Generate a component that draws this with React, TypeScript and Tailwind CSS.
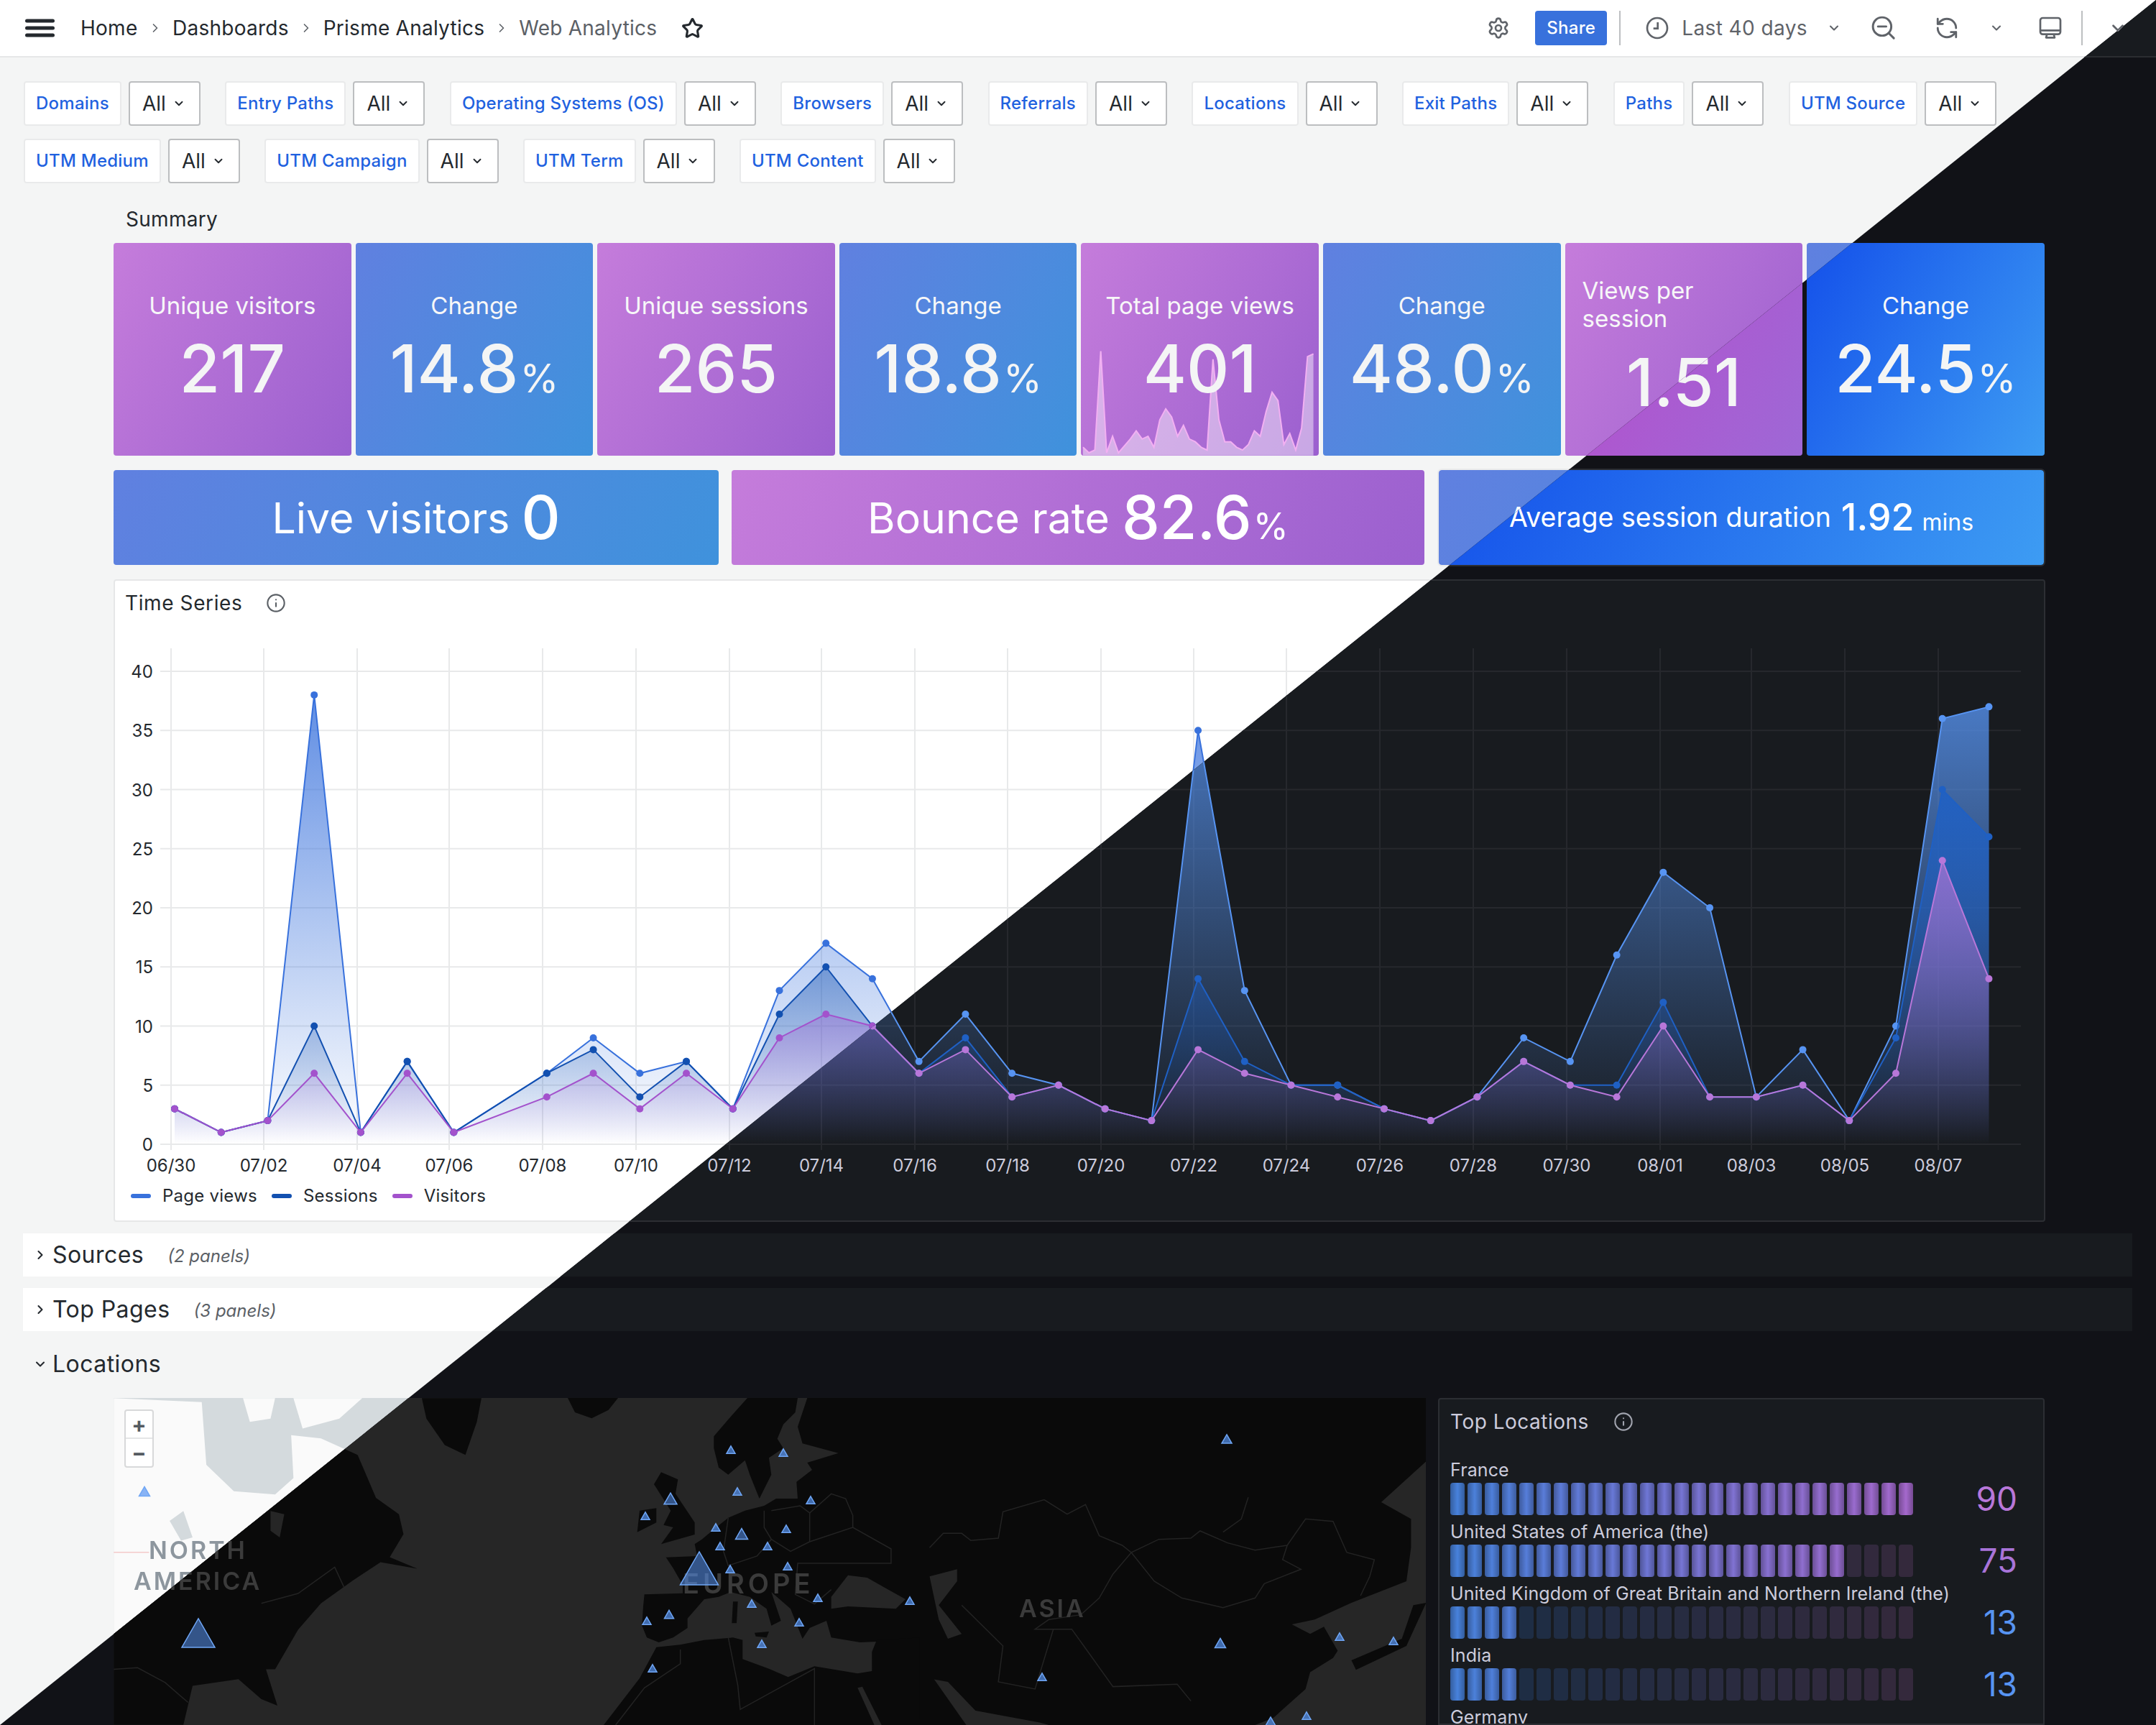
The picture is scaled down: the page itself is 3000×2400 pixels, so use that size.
import { ChevronDown, ChevronRight, Info, RefreshCcw, Settings, Star } from 'lucide-react';

// Grafana web analytics dashboard, light and dark theme split along the diagonal.

const light = {
  dark: false,
  page: 'bg-[#f4f5f5] text-[#24292e]',
  bar: 'bg-white border-[#e6e7e8]',
  icon: 'text-[#5f6369]',
  crumb: 'text-[#24292e]',
  crumbLast: 'text-[#5b6066]',
  divider: 'bg-[#bdbfc1]',
  share: 'bg-[#3871dc] text-white',
  label: 'bg-white border-[#e9eaeb] text-[#1f62e0]',
  select: 'bg-white border-[#bcbec0] text-[#24292e]',
  purple: 'bg-[linear-gradient(120deg,#c57cdb,#9b60cf)]',
  blue: 'bg-[linear-gradient(120deg,#6080e0,#3f92dc)]',
  panel: 'bg-white border-[#e6e7e8]',
  row: 'bg-white',
  muted: 'text-[#5b6066]',
  outline: 'outline-[#e9eaeb]',
};

const dark = {
  dark: true,
  page: 'bg-[#111217] text-[#ccccdc]',
  bar: 'bg-[#181b1f] border-[#2b2d31]',
  icon: 'text-[#9fa1a8]',
  crumb: 'text-[#ccccdc]',
  crumbLast: 'text-[#a0a3ad]',
  divider: 'bg-[#3b3d42]',
  share: 'bg-[#3d71d9] text-white',
  label: 'bg-[#181b1f] border-[#2b2d31] text-[#6e9fff]',
  select: 'bg-[#111217] border-[#3b3d42] text-[#ccccdc]',
  purple: 'bg-[linear-gradient(120deg,#b84ccb,#9e68d6)]',
  blue: 'bg-[linear-gradient(120deg,#1450ea,#3d9cf3)]',
  panel: 'bg-[#181b1f] border-[#2c2e33]',
  row: 'bg-[#181b1f]',
  muted: 'text-[#a0a3ad]',
  outline: 'outline-[#2c2e33]',
};

type Theme = typeof light;

const filterRows = [
  ['Domains', 'Entry Paths', 'Operating Systems (OS)', 'Browsers', 'Referrals', 'Locations', 'Exit Paths', 'Paths', 'UTM Source'],
  ['UTM Medium', 'UTM Campaign', 'UTM Term', 'UTM Content'],
];

const nil = null;
const pageViews = [3, 1, 2, 38, 1, 7, 1, nil, 6, 9, 6, 7, 3, 13, 17, 14, 7, 11, 6, 5, 3, 2, 35, 13, 5, 5, 3, 2, 4, 9, 7, 16, 23, 20, 4, 8, 2, 10, 36, 37];
const sessions = [3, 1, 2, 10, 1, 7, 1, nil, 6, 8, 4, 7, 3, 11, 15, 10, 6, 9, 4, 5, 3, 2, 14, 7, 5, 5, 3, 2, 4, 7, 5, 5, 12, 4, 4, 5, 2, 9, 30, 26];
const visitors = [3, 1, 2, 6, 1, 6, 1, nil, 4, 6, 3, 6, 3, 9, 11, 10, 6, 8, 4, 5, 3, 2, 8, 6, 5, 4, 3, 2, 4, 7, 5, 4, 10, 4, 4, 5, 2, 6, 24, 14];

const xTicks: [number, string][] = [
  [238, '06/30'], [367, '07/02'], [497, '07/04'], [625, '07/06'], [755, '07/08'], [885, '07/10'], [1015, '07/12'],
  [1143, '07/14'], [1273, '07/16'], [1402, '07/18'], [1532, '07/20'], [1661, '07/22'], [1790, '07/24'], [1920, '07/26'],
  [2050, '07/28'], [2180, '07/30'], [2310, '08/01'], [2437, '08/03'], [2567, '08/05'], [2697, '08/07'],
];

const px = (i: number) => 243 + 64.73 * i;
const py = (v: number) => 1592 - 16.45 * v;

function Chart({ t, id }: { t: Theme; id: string }) {
  const series = [
    { name: 'pv', data: pageViews, color: t.dark ? '#5794f2' : '#3871dc', peak: 38, top: 0.8 },
    { name: 'se', data: sessions, color: t.dark ? '#1f60c4' : '#1250b0', peak: 30, top: 0.9 },
    { name: 'vi', data: visitors, color: t.dark ? '#b877d9' : '#a352cc', peak: 24, top: 0.68 },
  ];
  const grid = t.dark ? '#26282d' : '#e8e9ea';
  const labelColor = t.dark ? '#ccccdc' : '#24292e';
  return (
    <svg viewBox="158 880 2686 760" width={2686} height={760} className="block">
      <defs>
        {series.map((s) => (
          <linearGradient key={s.name} id={id + s.name} gradientUnits="userSpaceOnUse" x1="0" x2="0" y1={py(s.peak)} y2={1592}>
            <stop offset="0" stopColor={s.color} stopOpacity={s.top} />
            <stop offset="1" stopColor={s.color} stopOpacity={0} />
          </linearGradient>
        ))}
      </defs>
      {[0, 5, 10, 15, 20, 25, 30, 35, 40].map((v) => (
        <g key={v}>
          <line x1={223} x2={2812} y1={py(v)} y2={py(v)} stroke={grid} strokeWidth={2} />
          <text x={213} y={py(v) + 9} textAnchor="end" fontSize={24} fill={labelColor}>{v}</text>
        </g>
      ))}
      {xTicks.map(([x, label]) => (
        <g key={label}>
          <line x1={x} x2={x} y1={902} y2={1600} stroke={grid} strokeWidth={2} />
          <text x={x} y={1630} textAnchor="middle" fontSize={24} fill={labelColor}>{label}</text>
        </g>
      ))}
      {series.map((s) => {
        const pts = s.data.flatMap((v, i) => (v === null ? [] : [[px(i), py(v)]]));
        const line = pts.map((p) => p.join(',')).join(' ');
        return (
          <g key={s.name}>
            <polygon points={`${pts[0][0]},1592 ${line} ${pts[pts.length - 1][0]},1592`} fill={`url(#${id + s.name})`} />
            <polyline points={line} fill="none" stroke={s.color} strokeWidth={2} />
            {pts.map((p) => (
              <circle key={p[0]} cx={p[0]} cy={p[1]} r={5} fill={s.color} />
            ))}
          </g>
        );
      })}
    </svg>
  );
}

function Sparkline() {
  const pts = pageViews.flatMap((v, i) => (v === null ? [] : [[3 + 8.23 * i, 296 - 3.83 * v]]));
  const line = pts.map((p) => p.join(',')).join(' ');
  return (
    <svg viewBox="0 0 331 296" className="absolute inset-0 h-full w-full">
      <polygon points={`3,296 ${line} ${pts[pts.length - 1][0]},296`} fill="#ffffff" fillOpacity={0.45} />
      <polyline points={line} fill="none" stroke="#f2b0f2" strokeWidth={2} />
    </svg>
  );
}

function Value({ value, unit }: { value: string; unit?: boolean }) {
  return (
    <div className="relative flex h-[92px] items-baseline justify-center text-[92px] leading-[92px] font-medium text-[#f4f5f5]">
      {value}
      {unit && <span className="ml-[2px] text-[55px] font-normal">%</span>}
    </div>
  );
}

function StatCard({ t, color, title, value, unit, spark }: { t: Theme; color: 'purple' | 'blue'; title: string; value: string; unit?: boolean; spark?: boolean }) {
  return (
    <div className={`relative flex h-[296px] w-[330.6px] flex-col items-center overflow-hidden rounded-[4px] pt-[68px] ${t[color]}`}>
      {spark && <Sparkline />}
      <div className="relative h-[38px] text-[33px] leading-[38px] text-[#f7f7f8]">{title}</div>
      <div className="mt-[23px] w-full">
        <Value value={value} unit={unit} />
      </div>
    </div>
  );
}

function ViewsCard({ t }: { t: Theme }) {
  return (
    <div className={`flex h-[296px] w-[330.6px] flex-col rounded-[4px] px-[24px] pt-[47px] ${t.purple}`}>
      <div className="text-[33px] leading-[39px] text-[#f7f7f8]">Views per<br />session</div>
      <div className="mt-[23px]">
        <Value value="1.51" />
      </div>
    </div>
  );
}

function Summary({ t }: { t: Theme }) {
  return (
    <div className="pl-[158px]">
      <div className="h-[36px] pl-[17px] text-[28px] leading-[36px] tracking-[0.3px]">Summary</div>
      <div className="mt-[15px] flex gap-[6px]">
        <StatCard t={t} color="purple" title="Unique visitors" value="217" />
        <StatCard t={t} color="blue" title="Change" value="14.8" unit />
        <StatCard t={t} color="purple" title="Unique sessions" value="265" />
        <StatCard t={t} color="blue" title="Change" value="18.8" unit />
        <StatCard t={t} color="purple" title="Total page views" value="401" spark />
        <StatCard t={t} color="blue" title="Change" value="48.0" unit />
        <ViewsCard t={t} />
        <StatCard t={t} color="blue" title="Change" value="24.5" unit />
      </div>
      <div className="mt-[20px] flex h-[132px] w-[2686px] text-white">
        <div className={`flex w-[842px] items-center justify-center rounded-[4px] leading-none ${t.blue}`}>
          <span className="text-[59px]">Live visitors</span>
          <span className="ml-[16px] text-[84px] font-medium">0</span>
        </div>
        <div className={`ml-[18px] flex w-[964px] items-center justify-center rounded-[4px] leading-none ${t.purple}`}>
          <span className="text-[59px]">Bounce rate</span>
          <div className="ml-[17px] flex items-baseline">
            <span className="text-[84px] font-medium">82.6</span>
            <span className="ml-[2px] text-[50px]">%</span>
          </div>
        </div>
        <div className={`ml-[20px] flex w-[842px] items-center justify-center rounded-[4px] leading-none outline-2 ${t.blue} ${t.outline}`}>
          <span className="text-[37.5px]">Average session duration</span>
          <div className="ml-[14px] flex items-baseline">
            <span className="text-[52px] font-medium">1.92</span>
            <span className="ml-[11px] text-[32px]">mins</span>
          </div>
        </div>
      </div>
    </div>
  );
}

function Filters({ t }: { t: Theme }) {
  return (
    <div className="flex flex-col gap-[18px] pt-[33px] pl-[33px]">
      {filterRows.map((row) => (
        <div key={row[0]} className="flex h-[62px] gap-[34.4px]">
          {row.map((name) => (
            <div key={name} className="flex gap-[10px]">
              <div className={`flex items-center rounded-[4px] border-2 px-[15px] text-[24px] font-medium tracking-[0.25px] ${t.label}`}>{name}</div>
              <div className={`flex w-[100px] items-center rounded-[4px] border-2 pl-[17px] text-[28px] ${t.select}`}>
                All
                <ChevronDown size={18} strokeWidth={2.5} className="ml-[9px]" />
              </div>
            </div>
          ))}
        </div>
      ))}
    </div>
  );
}

function TopBar({ t }: { t: Theme }) {
  return (
    <div className={`flex h-[80px] items-center border-b-2 pr-[40px] pl-[35px] text-[28px] tracking-[0.25px] ${t.bar}`}>
      <svg width={41} height={26} viewBox="0 0 41 26" className={t.crumb}>
        <path d="M2.5 3h36M2.5 13h36M2.5 23h36" stroke="currentColor" strokeWidth={5} strokeLinecap="round" />
      </svg>
      <span className={`ml-[36px] w-[80px] ${t.crumb}`}>Home</span>
      <ChevronRight size={20} strokeWidth={2} className={`mx-[14px] ${t.icon}`} />
      <span className={t.crumb}>Dashboards</span>
      <ChevronRight size={20} strokeWidth={2} className={`mx-[14px] ${t.icon}`} />
      <span className={t.crumb}>Prisme Analytics</span>
      <ChevronRight size={20} strokeWidth={2} className={`mx-[14px] ${t.icon}`} />
      <span className={t.crumbLast}>Web Analytics</span>
      <Star size={31} strokeWidth={2.4} className={`ml-[34px] ${t.crumb}`} />
      <div className="flex-1" />
      <Settings size={32} strokeWidth={2} className={t.icon} />
      <div className={`ml-[35px] flex h-[48px] w-[100px] items-center justify-center rounded-[4px] text-[24px] font-medium ${t.share}`}>Share</div>
      <div className={`ml-[17px] h-[48px] w-[2px] ${t.divider}`} />
      <svg width={32} height={32} viewBox="0 0 24 24" fill="none" stroke="currentColor" strokeWidth={2} className={`ml-[35px] ${t.icon}`}>
        <circle cx={12} cy={12} r={10.5} />
        <path d="M12.5 6v6.5H8" />
      </svg>
      <span className={`ml-[18px] tracking-[0.4px] ${t.icon}`}>Last 40 days</span>
      <ChevronDown size={20} strokeWidth={2.5} className={`ml-[27px] ${t.icon}`} />
      <svg width={34} height={34} viewBox="0 0 24 24" fill="none" stroke="currentColor" strokeWidth={2.1} strokeLinecap="round" className={`ml-[42px] ${t.icon}`}>
        <circle cx={10.5} cy={10.5} r={9} />
        <path d="M6.5 10.5h8M17.5 17.5l4.5 4.5" />
      </svg>
      <RefreshCcw size={34} strokeWidth={2} className={`ml-[54px] ${t.icon}`} />
      <ChevronDown size={20} strokeWidth={2.5} className={`ml-[42px] ${t.icon}`} />
      <svg width={32} height={32} viewBox="0 0 24 24" fill="none" stroke="currentColor" strokeWidth={2} strokeLinejoin="round" className={`ml-[49px] ${t.icon}`}>
        <rect x={1.5} y={1.5} width={21} height={17} rx={2.5} />
        <path d="M1.5 14.5h21M8.5 18.5l-1 3.5h9l-1-3.5" />
      </svg>
      <div className={`ml-[27px] h-[48px] w-[2px] ${t.divider}`} />
      <ChevronDown size={26} strokeWidth={2.5} className={`ml-[36px] ${t.icon}`} />
    </div>
  );
}

function CollapsedRow({ t, title, note }: { t: Theme; title: string; note: string }) {
  return (
    <div className={`mr-[33px] ml-[32px] flex h-[60px] items-center ${t.row}`}>
      <ChevronRight size={20} strokeWidth={2.5} className="ml-[14px]" />
      <span className="ml-[7px] text-[32px] tracking-[0.45px]">{title}</span>
      <span className={`ml-[33px] pt-[3px] text-[24px] italic ${t.muted}`}>{note}</span>
    </div>
  );
}

const markers: [number, number, number][] = [
  [973, 2182, 53], [933, 2085, 18], [898, 2109, 12], [1017, 2017, 12], [1090, 2021, 12], [1026, 2075, 12], [1128, 2087, 12],
  [996, 2125, 12], [1032, 2134, 17], [1094, 2127, 12], [1002, 2151, 12], [1068, 2151, 12], [1016, 2183, 12], [1096, 2179, 12],
  [1138, 2223, 12], [1266, 2227, 12], [1046, 2231, 12], [931, 2246, 13], [900, 2255, 12], [1112, 2257, 12], [1060, 2287, 12],
  [908, 2321, 12], [1707, 2002, 14], [1698, 2286, 15], [1450, 2333, 12], [1864, 2277, 12], [1939, 2283, 12], [1768, 2395, 14],
  [1818, 2387, 12], [201, 2075, 15], [276, 2272, 46],
];

function MapPanel({ t }: { t: Theme }) {
  const ocean = t.dark ? '#262626' : '#d4dadd';
  const land = t.dark ? '#0a0a0a' : '#fafafa';
  const border = t.dark ? '#232323' : '#e8e8e8';
  const label = t.dark ? '#3b3b3b' : '#8d969e';
  const lines = { fill: 'none', stroke: border, strokeWidth: 1.5, vectorEffect: 'non-scaling-stroke' as const };
  return (
    <div className={`relative h-[455px] w-[1826px] shrink-0 overflow-hidden ${t.dark ? 'bg-[#262626]' : 'bg-[#d4dadd]'}`}>
      <svg viewBox="158 1945 1826 455" width={1826} height={455} className="block">
        <rect x={158} y={1945} width={1826} height={455} fill={ocean} />
        {/* Americas, in coordinates of a 1.568 x 2.178 stretched view */}
        <g transform="translate(0 1680) scale(0.638 0.459)" fill={land} className="blur-[0.8px]">
          <polygon points="248,578 440,590 450,780 510,860 600,870 640,820 635,690 700,700 780,750 820,880 870,930 880,990 850,1060 910,1095 830,1075 770,1130 700,1200 650,1280 600,1400 580,1400 605,1510 570,1490 520,1430 420,1450 400,1568 248,1568" />
          <polygon points="530,578 600,578 590,640 545,650" />
          <polygon points="640,578 790,578 740,640 660,670" />
          <polygon points="920,578 1050,578 1040,650 1015,750 970,720 930,640" />
          <polyline points="248,1045 325,1045" {...lines} stroke={t.dark ? '#232323' : '#f3c9c9'} />
          <polyline points="248,1400 300,1395 360,1440 410,1500" {...lines} />
          <polyline points="570,1200 650,1170 730,1090 750,1150" {...lines} />
          <polygon points="370,950 400,920 420,1000 395,1010" fill={ocean} />
          <polygon points="590,920 620,930 610,1000 590,980" fill={ocean} />
        </g>
        {/* Europe and Africa, 3x view */}
        <g transform="translate(780 1945) scale(0.3333)" fill={land} className="blur-[0.8px]">
          <polygon points="30,0 240,0 200,50 130,85 60,60" />
          <polygon points="640,160 700,90 780,0 990,0 980,60 930,110 905,170 930,210 870,250 880,320 830,420 790,320 770,260 700,320 660,290 640,210" />
          <polygon points="1030,0 3700,0 3700,1365 1500,1365 1480,1010 1250,1020 1130,1000 1110,930 1040,960 1010,1005 960,880 880,810 920,930 880,950 860,880 790,830 710,810 660,830 600,840 530,920 530,960 470,1000 410,1020 360,1000 340,950 345,870 350,820 510,815 510,780 470,710 440,665 570,660 560,610 590,590 650,540 700,500 770,470 850,450 900,420 990,420 985,350 1050,300 1030,270 1160,230 1010,190 990,120" />
          <polygon points="1130,830 1200,740 1280,750 1350,790 1440,840 1400,880 1200,870 1130,880" fill={ocean} />
          <polygon points="420,310 490,340 480,400 560,520 560,570 420,610 470,540 430,530 460,470 390,360" />
          <polygon points="330,470 400,460 400,520 320,560" />
          <polygon points="720,850 740,850 735,940 715,940" />
          <polygon points="810,980 870,975 860,1000 815,995" />
          <polygon points="400,1040 500,1030 600,1010 720,1000 760,1010 760,1090 870,1130 950,1165 1060,1120 1240,1150 1300,1140 1300,1060 1320,1010 1500,1000 1500,1365 180,1365 330,1170" />
          <polygon points="1240,1210 1260,1205 1340,1365 1310,1365" fill={ocean} />
          <polyline points="850,470 850,540 880,590 960,640 1040,600 1040,480 1000,450 880,470" {...lines} />
          <polyline points="1040,600 1220,540 1380,630 1380,690 1160,690 990,690 980,820 1060,860 1130,800" {...lines} />
          <polyline points="700,500 680,640 700,700 820,660 880,590" {...lines} />
          <polyline points="1040,480 1130,400 1190,420 1220,490 1220,540" {...lines} />
          <polyline points="700,1000 740,1200 750,1300 1060,1130 1060,1365" {...lines} />
          <polyline points="500,1050 500,1110 350,1210 230,1365" {...lines} />
        </g>
        {/* Asia, in coordinates of a 1.568 x 3 stretched view */}
        <g transform="translate(1000 1900) scale(0.638 0.3333)" className="blur-[0.8px]">
          <polygon fill={ocean} points="1543,400 1445,570 1510,640 1510,760 1500,900 1380,990 1300,1060 1250,1080 1290,1120 1320,1090 1350,1190 1340,1220 1290,1280 1280,1350 1210,1470 1170,1500 1543,1500" />
          <polygon fill={land} points="1543,990 1500,1170 1390,1270 1380,1230 1490,1140 1515,1000" />
          <polygon fill={ocean} points="460,880 520,850 520,900 480,1000 530,1120 500,1140 480,1060" />
          <polygon fill={ocean} points="470,1310 500,1320 560,1440 700,1490 720,1500 540,1500" />
          <polyline points="460,760 490,700 530,700 550,730 610,720 620,610 710,560 760,620 800,580 830,710 880,750 900,780 960,725 1030,720 1050,690 1110,740 1170,770 1240,750 1280,640 1340,650 1370,780 1430,810 1420,880 1400,960" {...lines} />
          <polyline points="900,780 950,900 1010,970 1100,1010 1170,970 1190,910 1270,850 1230,810 1240,750" {...lines} />
          <polyline points="900,780 860,870 830,970 790,1040 720,1060 690,1100 770,1100 800,1180 860,1340 1000,1330 1030,1400" {...lines} />
          <polyline points="530,1000 620,1170 610,1320 690,1350 730,1100" {...lines} />
          <polyline points="1155,550 1140,640 1100,695" {...lines} />
        </g>
        <g fontWeight={600} fill={label} className="blur-[0.7px]">
          <text x={207} y={2169} fontSize={34} letterSpacing={3}>NORTH</text>
          <text x={186} y={2212} fontSize={34} letterSpacing={3}>AMERICA</text>
          <text x={950} y={2217} fontSize={38} letterSpacing={5}>EUROPE</text>
          <text x={1418} y={2250} fontSize={34} letterSpacing={3}>ASIA</text>
        </g>
        {markers.map(([x, y, w]) => {
          const h = w * 0.87;
          return (
            <polygon
              key={`${x}-${y}`}
              points={`${x},${y - h / 2} ${x + w / 2},${y + h / 2} ${x - w / 2},${y + h / 2}`}
              fill="#5794f2"
              fillOpacity={w > 16 ? 0.55 : 0.7}
              stroke="#6fa6f5"
              strokeWidth={1.5}
            />
          );
        })}
      </svg>
      <div className="absolute top-[16px] left-[15px] flex h-[81px] w-[41px] flex-col rounded-[4px] border-2 border-[#d8d9da] bg-white text-[#555b61]">
        <span className="flex h-[39px] items-center justify-center border-b-2 border-[#e4e5e6] text-[30px] leading-none font-bold">+</span>
        <span className="flex flex-1 items-center justify-center text-[30px] leading-none font-bold">−</span>
      </div>
    </div>
  );
}

const locations: [string, number, number, string][] = [
  ['France', 27, 90, 'text-[#b877d9]'],
  ['United States of America (the)', 23, 75, 'text-[#a874d9]'],
  ['United Kingdom of Great Britain and Northern Ireland (the)', 4, 13, 'text-[#5794f2]'],
  ['India', 4, 13, 'text-[#5794f2]'],
];

function Led({ index, lit }: { index: number; lit: boolean }) {
  const f = index / 26;
  const r = Math.round(72 + f * 93);
  const g = Math.round(130 - f * 25);
  const b = Math.round(220 - f * 15);
  const edge = `rgb(${r * 0.72},${g * 0.72},${b * 0.72})`;
  const background = lit
    ? `linear-gradient(90deg, ${edge}, rgb(${r},${g},${b}), ${edge})`
    : `rgb(${26 + f * 26},${46 - f * 5},${70 - f * 10})`;
  return <div className="h-[45px] w-[20px] rounded-[4px]" style={{ background }} />;
}

function TopLocations({ t }: { t: Theme }) {
  return (
    <div className={`ml-[17px] h-[455px] w-[844px] shrink-0 overflow-hidden rounded-t-[4px] border-2 px-[15px] ${t.panel}`}>
      <div className="flex h-[62px] items-center text-[28px] tracking-[0.5px]">
        Top Locations
        <Info size={28} strokeWidth={1.8} className={`ml-[34px] ${t.muted}`} />
      </div>
      <div className="mt-[18px] flex flex-col">
        {locations.map(([name, count, value, color]) => (
          <div key={name} className="h-[86px]">
            <div className="h-[36px] text-[25px] leading-[36px] tracking-[0.1px] whitespace-nowrap">{name}</div>
            <div className="flex items-center">
              <div className="flex gap-[4px]">
                {Array.from({ length: 27 }, (_, i) => (
                  <Led key={i} index={i} lit={i < count} />
                ))}
              </div>
              <div className={`w-[145px] text-right text-[46px] leading-[45px] ${color}`}>{value}</div>
            </div>
          </div>
        ))}
        <div className="text-[25px] leading-[36px] tracking-[0.1px]">Germany</div>
      </div>
    </div>
  );
}

function TimeSeries({ t, id }: { t: Theme; id: string }) {
  const legend = [
    { name: 'Page views', color: t.dark ? 'bg-[#5794f2]' : 'bg-[#3871dc]', ml: 'ml-0' },
    { name: 'Sessions', color: t.dark ? 'bg-[#1f60c4]' : 'bg-[#1250b0]', ml: 'ml-[20px]' },
    { name: 'Visitors', color: t.dark ? 'bg-[#b877d9]' : 'bg-[#a352cc]', ml: 'ml-[20px]' },
  ];
  return (
    <div className={`mt-[20px] ml-[158px] h-[894px] w-[2688px] rounded-[4px] border-2 ${t.panel}`}>
      <div className="flex h-[62px] items-center pl-[14px] text-[28px] tracking-[0.6px]">
        Time Series
        <Info size={28} strokeWidth={1.8} className={`ml-[33px] ${t.muted}`} />
      </div>
      <div className="-ml-[2px] mt-[10px]">
        <Chart t={t} id={id} />
      </div>
      <div className="flex h-[48px] items-center pl-[22px] text-[24px] tracking-[0.25px]">
        {legend.map((l) => (
          <div key={l.name} className={`flex items-center ${l.ml}`}>
            <span className={`h-[6px] w-[28px] rounded-full ${l.color}`} />
            <span className="ml-[16px]">{l.name}</span>
          </div>
        ))}
      </div>
    </div>
  );
}

function Dashboard({ t, id }: { t: Theme; id: string }) {
  return (
    <div className={`h-[2400px] w-[3000px] overflow-hidden font-[Inter,sans-serif] ${t.page}`}>
      <TopBar t={t} />
      <Filters t={t} />
      <div className="mt-[32px]">
        <Summary t={t} />
      </div>
      <TimeSeries t={t} id={id} />
      <div className="mt-[16px] flex flex-col gap-[16px]">
        <CollapsedRow t={t} title="Sources" note="(2 panels)" />
        <CollapsedRow t={t} title="Top Pages" note="(3 panels)" />
      </div>
      <div className="mt-[16px] flex h-[60px] items-center pl-[46px]">
        <ChevronDown size={20} strokeWidth={2.5} />
        <span className="ml-[7px] text-[32px] tracking-[0.45px]">Locations</span>
      </div>
      <div className="mt-[17px] flex pl-[158px]">
        <MapPanel t={t} />
        <TopLocations t={t} />
      </div>
    </div>
  );
}

export default function App() {
  return (
    <div className="relative h-[2400px] w-[3000px] overflow-hidden">
      <Dashboard t={light} id="l" />
      <div className="absolute inset-0 [clip-path:polygon(100%_0,100%_100%,0_100%)]">
        <Dashboard t={dark} id="d" />
      </div>
    </div>
  );
}
